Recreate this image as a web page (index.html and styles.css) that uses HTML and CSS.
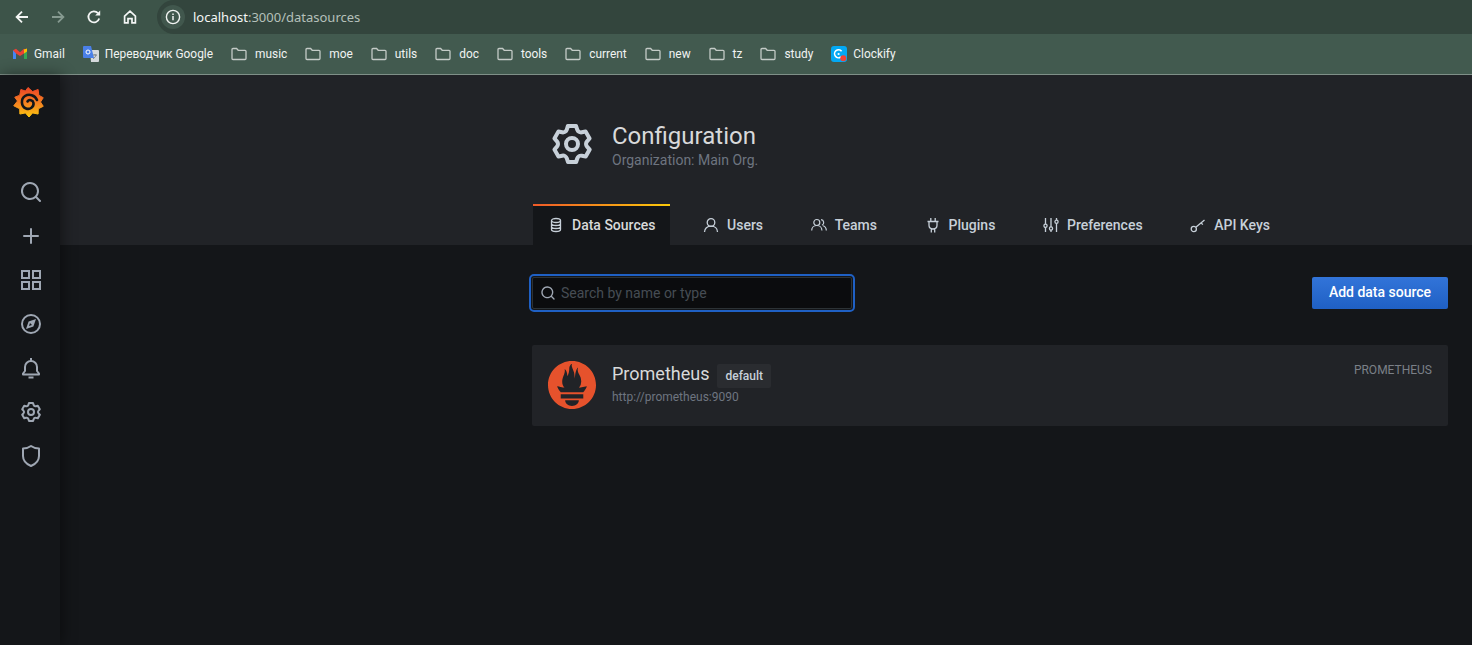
FILE: index.html
```html
<!DOCTYPE html>
<html lang="en">
<head>
    <meta charset="UTF-8">
    <meta name="viewport" content="width=device-width, initial-scale=1.0">
    <title>Configuration: Data Sources</title>
    <link rel="stylesheet" href="styles.css">
</head>
<body>
    <svg class="sprites" aria-hidden="true">
        <symbol id="folder" viewBox="0 0 16 16">
            <path d="M1 3.5a1 1 0 0 1 1-1h3.6l1.6 1.8H14a1 1 0 0 1 1 1v7.2a1 1 0 0 1-1 1H2a1 1 0 0 1-1-1z" fill="none" stroke="currentColor" stroke-width="1.3"/>
        </symbol>
        <symbol id="search" viewBox="0 0 24 24">
            <path fill="currentColor" d="M21.71,20.29,18,16.61A9,9,0,1,0,16.61,18l3.68,3.68a1,1,0,0,0,1.42,0A1,1,0,0,0,21.71,20.29ZM11,18a7,7,0,1,1,7-7A7,7,0,0,1,11,18Z"/>
        </symbol>
        <symbol id="cog" viewBox="-0.36 0 24 24">
            <path fill="currentColor" d="M19.9,12.66a1,1,0,0,1,0-1.32L21.18,9.9a1,1,0,0,0,.12-1.17l-2-3.46a1,1,0,0,0-1.07-.48l-1.88.38a1,1,0,0,1-1.15-.66l-.61-1.83A1,1,0,0,0,13.64,2h-4a1,1,0,0,0-1,.68L8.08,4.51a1,1,0,0,1-1.15.66L5,4.79A1,1,0,0,0,4,5.27L2,8.73A1,1,0,0,0,2.1,9.9l1.27,1.44a1,1,0,0,1,0,1.32L2.1,14.1A1,1,0,0,0,2,15.27l2,3.46a1,1,0,0,0,1.07.48l1.88-.38a1,1,0,0,1,1.15.66l.61,1.83a1,1,0,0,0,1,.68h4a1,1,0,0,0,.95-.68l.61-1.83a1,1,0,0,1,1.15-.66l1.88.38a1,1,0,0,0,1.07-.48l2-3.46a1,1,0,0,0-.12-1.17ZM18.41,14l.8.9-1.28,2.22-1.18-.24a3,3,0,0,0-3.45,2L12.92,20H10.36L10,18.86a3,3,0,0,0-3.45-2l-1.18.24L4.07,14.89l.8-.9a3,3,0,0,0,0-4l-.8-.9L5.35,6.89l1.18.24a3,3,0,0,0,3.45-2L10.36,4h2.56l.38,1.14a3,3,0,0,0,3.45,2l1.18-.24,1.28,2.22-.8.9A3,3,0,0,0,18.41,14ZM11.64,8a4,4,0,1,0,4,4A4,4,0,0,0,11.64,8Zm0,6a2,2,0,1,1,2-2A2,2,0,0,1,11.64,14Z"/>
        </symbol>
    </svg>

    <div class="browser">
        <div class="toolbar">
            <svg class="nav-icon" viewBox="0 0 16 16"><path d="M14 8H3M8 2.6 2.6 8 8 13.4" fill="none" stroke="currentColor" stroke-width="1.8"/></svg>
            <svg class="nav-icon disabled" viewBox="0 0 16 16"><path d="M2 8h11M8 2.6 13.4 8 8 13.4" fill="none" stroke="currentColor" stroke-width="1.8"/></svg>
            <svg class="nav-icon" viewBox="0 0 16 16"><path d="M13.2 9.5A5.5 5.5 0 1 1 12 4.2" fill="none" stroke="currentColor" stroke-width="1.8"/><path d="M14.2 1.5v5h-5z" fill="currentColor"/></svg>
            <svg class="nav-icon" viewBox="0 0 16 16"><path d="M2.6 7.2 8 2.2l5.4 5v6.6H10V9.6H6v4.2H2.6z" fill="none" stroke="currentColor" stroke-width="1.7"/></svg>
            <div class="omnibox">
                <span class="site-info">
                    <svg viewBox="0 0 16 16" width="16" height="16"><circle cx="8" cy="8" r="6.6" fill="none" stroke="currentColor" stroke-width="1.4"/><path d="M8 7v4.2M8 4.4v1.5" stroke="currentColor" stroke-width="1.5"/></svg>
                </span>
                <span class="url"><b>localhost</b>:3000/datasources</span>
            </div>
        </div>
        <div class="bookmarks">
            <a class="bookmark site">
                <svg width="16" height="16" viewBox="0 0 16 16"><path d="M1 4v9h3V6.5z" fill="#4285f4"/><path d="M12 6.5V13h3V4z" fill="#34a853"/><path d="M1 4.2 4 2.8 8 6.2 12 2.8l3 1.4-3 3.4L8 10 4 7.6z" fill="#ea4335"/><path d="M12 3.4 15 2.6V5.4l-3 2.2z" fill="#fbbc04"/></svg>
                Gmail
            </a>
            <a class="bookmark site">
                <svg width="16" height="18" viewBox="0 0 16 18"><path d="M7 5h8a1 1 0 0 1 1 1v10a1 1 0 0 1-1 1H8z" fill="#d5d9dc"/><path d="M1 1h7l3 12H1a1 1 0 0 1-1-1V2a1 1 0 0 1 1-1z" fill="#4a80e8"/><circle cx="5" cy="7" r="2" fill="none" stroke="#fff" stroke-width="1"/><path d="M10 10h4M12 9v1M13 10c-.5 2-1.600 3-3 3.600" fill="none" stroke="#7b8288" stroke-width="1"/></svg>
                Переводчик Google
            </a>
            <a class="bookmark"><svg class="folder"><use href="#folder"/></svg>music</a>
            <a class="bookmark"><svg class="folder"><use href="#folder"/></svg>moe</a>
            <a class="bookmark"><svg class="folder"><use href="#folder"/></svg>utils</a>
            <a class="bookmark"><svg class="folder"><use href="#folder"/></svg>doc</a>
            <a class="bookmark"><svg class="folder"><use href="#folder"/></svg>tools</a>
            <a class="bookmark"><svg class="folder"><use href="#folder"/></svg>current</a>
            <a class="bookmark"><svg class="folder"><use href="#folder"/></svg>new</a>
            <a class="bookmark"><svg class="folder"><use href="#folder"/></svg>tz</a>
            <a class="bookmark"><svg class="folder"><use href="#folder"/></svg>study</a>
            <a class="bookmark site">
                <svg width="16" height="16" viewBox="0 0 16 16"><rect width="16" height="16" rx="3" fill="#03a9f4"/><path d="M10.6 5.2A4 4 0 1 0 10 11" fill="none" stroke="#fff" stroke-width="1.6"/><circle cx="7.600" cy="8" r="1.100" fill="#fff"/><circle cx="12.300" cy="12.300" r="3" fill="#f44336"/></svg>
                Clockify
            </a>
        </div>
    </div>

    <div class="app">
        <aside class="sidemenu">
            <svg class="logo" viewBox="0 0 32 32" width="32" height="32">
                <defs>
                    <linearGradient id="logoFill" x1="0" y1="0" x2="0" y2="1">
                        <stop offset="0.1" stop-color="#ee4e26"/>
                        <stop offset="0.6" stop-color="#f68b1f"/>
                        <stop offset="1" stop-color="#fcc80e"/>
                    </linearGradient>
                </defs>
                <polygon fill="url(#logoFill)" stroke="url(#logoFill)" stroke-linejoin="round" points="15,1.500 19.550,5.560 25.110,3.460 25.800,9.240 30.240,11.710 27.500,16 30.240,20.290 25.300,22.760 25.110,28.040 19.550,26.940 16,31 12.450,26.940 6.890,28.040 6.700,22.760 .760,19.790 4.500,15 1.760,11.210 6.700,9.240 7.890,3.460 12.450,5.060"/>
                <path d="M24 14C22 9 16 7.500 12 10 7.500 13 8 20.500 13 22.500 17 24 21 21 20.500 17 20 14 16 13 14.500 15.500" fill="none" stroke="#141619" stroke-width="2.600" stroke-linecap="round"/>
            </svg>
            <nav class="side-icons">
                <svg><use href="#search"/></svg>
                <svg viewBox="0 0 24 24"><path fill="currentColor" d="M19,11H13V5a1,1,0,0,0-2,0v6H5a1,1,0,0,0,0,2h6v6a1,1,0,0,0,2,0V13h6a1,1,0,0,0,0-2Z"/></svg>
                <svg viewBox="0 0 24 24"><path fill="none" stroke="currentColor" stroke-width="2" d="M3 3h7v7H3zM14 3h7v7h-7zM3 14h7v7H3zM14 14h7v7h-7z"/></svg>
                <svg viewBox="0 0 24 24"><circle cx="12" cy="12" r="9" fill="none" stroke="currentColor" stroke-width="2"/><path fill="currentColor" d="M17 7l-2.600 7.400L7 17l2.600-7.400zM11 11l-1 3 3-1z" fill-rule="evenodd"/></svg>
                <svg viewBox="0 0 24 24"><path fill="none" stroke="currentColor" stroke-width="2" stroke-linejoin="round" d="M6 11a6 6 0 0 1 12 0v4l2 2.500v1H4v-1L6 15zM12 2v3M9.500 21.500h5"/></svg>
                <svg viewBox="0 0 24 24"><use href="#cog"/></svg>
                <svg viewBox="0 0 24 24"><path fill="none" stroke="currentColor" stroke-width="2" stroke-linejoin="round" d="M4 4.500C7 4.500 9.500 3.800 12 2c2.500 1.800 5 2.500 8 2.500V12c0 4.500-3.300 8-8 10-4.700-2-8-5.500-8-10z"/></svg>
            </nav>
        </aside>

        <main class="content">
            <header class="page-header">
                <div class="container">
                    <div class="page-title">
                        <svg class="title-icon"><use href="#cog"/></svg>
                        <div>
                            <h1>Configuration</h1>
                            <p>Organization: Main Org.</p>
                        </div>
                    </div>
                    <ul class="tabs">
                        <li class="tab active">
                            <svg viewBox="0 0 16 16"><g fill="none" stroke="currentColor" stroke-width="1.300"><ellipse cx="8" cy="3.500" rx="4.500" ry="2"/><path d="M3.500 3.500v9c0 1.100 2 2 4.500 2s4.500-.9 4.500-2v-9M3.500 6.500c0 1.100 2 2 4.500 2s4.500-.9 4.500-2M3.500 9.500c0 1.100 2 2 4.500 2s4.500-.9 4.500-2"/></g></svg>
                            Data Sources
                        </li>
                        <li class="tab">
                            <svg viewBox="0 0 16 16"><g fill="none" stroke="currentColor" stroke-width="1.300"><circle cx="8" cy="5.500" r="3.800"/><path d="M1.500 15c0-3.500 2.800-5.800 6.500-5.800s6.500 2.300 6.500 5.800"/></g></svg>
                            Users
                        </li>
                        <li class="tab">
                            <svg viewBox="0 0 16 16"><g fill="none" stroke="currentColor" stroke-width="1.200"><circle cx="5.800" cy="5.500" r="3"/><path d="M.7 13.500c0-3 2.200-5 5.100-5s5.100 2 5.100 5M10 2.600a3 3 0 0 1 1 5.700M12 8.700c2 .6 3.300 2.400 3.300 4.800"/></g></svg>
                            Teams
                        </li>
                        <li class="tab">
                            <svg viewBox="0 0 16 16"><g fill="none" stroke="currentColor" stroke-width="1.300"><path d="M2.500 4.500h11M4 4.500v3.800c0 2.300 1.800 3.700 4 3.700s4-1.400 4-3.700V4.500M5.800 1v3.500M10.200 1v3.500M6.300 12v3.500M9.700 12v3.500"/></g></svg>
                            Plugins
                        </li>
                        <li class="tab">
                            <svg viewBox="0 0 16 16"><g fill="none" stroke="currentColor" stroke-width="1.300"><path d="M2.500 1v6M2.500 10.500V15M8 1v9M8 13v2M13.500 1v2M13.500 6.500V15"/><circle cx="2.500" cy="8.800" r="1.600"/><circle cx="8" cy="11.500" r="1.600"/><circle cx="13.500" cy="4.800" r="1.600"/></g></svg>
                            Preferences
                        </li>
                        <li class="tab">
                            <svg viewBox="0 0 16 16"><g fill="none" stroke="currentColor" stroke-width="1.300"><circle cx="3.800" cy="12" r="2.600"/><path d="M5.800 10.200 14.500 3M11 5.800l1.800 1.800"/></g></svg>
                            API Keys
                        </li>
                    </ul>
                </div>
            </header>

            <section class="container page-body">
                <div class="action-bar">
                    <label class="search-box">
                        <svg><use href="#search"/></svg>
                        <input type="text" placeholder="Search by name or type">
                    </label>
                    <button type="button" class="btn-primary">Add data source</button>
                </div>
                <div class="ds-card">
                    <svg class="ds-logo" viewBox="0 0 24 24"><path fill="#e6522c" d="M12 0C5.373 0 0 5.372 0 12c0 6.627 5.373 12 12 12s12-5.373 12-12c0-6.628-5.373-12-12-12zm0 22.460c-1.885 0-3.414-1.260-3.414-2.814h6.828c0 1.553-1.528 2.813-3.414 2.813zm5.640-3.745H6.360v-2.046h11.280v2.046zm-.04-3.098H6.391c-.037-.043-.075-.086-.111-.130-1.155-1.401-1.427-2.133-1.690-2.879-.005-.025 1.400.287 2.395.511 0 0 .513.119 1.262.255-.720-.843-1.147-1.915-1.147-3.010 0-2.406 1.845-4.508 1.180-6.207.648.053 1.340 1.367 1.387 3.422.689-.951.977-2.690.977-3.755 0-1.103.727-2.385 1.454-2.429-.648 1.069.168 1.984.894 4.256.272.854.237 2.290.447 3.201.070-1.892.395-4.652 1.595-5.605-.529 1.200.079 2.702.494 3.424.671 1.164 1.078 2.047 1.078 3.716a4.642 4.642 0 0 1-1.110 2.996c.792-.149 1.340-.283 1.340-.283l2.573-.502s-.374 1.538-1.810 3.019z"/></svg>
                    <div class="ds-info">
                        <div class="ds-name">
                            <span>Prometheus</span>
                            <span class="badge">default</span>
                        </div>
                        <div class="ds-url">http://prometheus:9090</div>
                    </div>
                    <div class="ds-type">PROMETHEUS</div>
                </div>
            </section>
        </main>
    </div>
</body>
</html>
```

FILE: styles.css
```css
* {
    box-sizing: border-box;
}
html, body {
    height: 100%;
}
body {
    margin: 0;
    display: flex;
    flex-direction: column;
    overflow: hidden;
    background-color: #141619;
    font-family: Roboto, "Liberation Sans", sans-serif;
    font-size: 14px;
    color: #c7d0d9;
}
.sprites {
    display: none;
}

/* browser chrome */
.browser {
    flex: none;
    font-family: "Noto Sans", "Noto Sans CJK SC", sans-serif;
    color: #f1f3f2;
}
.toolbar {
    height: 34px;
    display: flex;
    align-items: center;
    padding-left: 14px;
    background-color: #3d5449;
}
.nav-icon {
    width: 16px;
    height: 16px;
    margin-right: 20px;
    color: #f4f6f5;
}
.nav-icon.disabled {
    color: #869a90;
}
.omnibox {
    flex: 1;
    height: 34px;
    margin-left: -1px;
    display: flex;
    align-items: center;
    gap: 8px;
    padding-left: 4px;
    border-radius: 17px 0 0 17px;
    background-color: #33453d;
}
.site-info {
    width: 24px;
    height: 24px;
    display: flex;
    align-items: center;
    justify-content: center;
    border-radius: 50%;
    background-color: #41574d;
}
.url {
    font-size: 13px;
    color: #b5c0ba;
}
.url b {
    font-weight: 400;
    color: #f4f6f5;
}
.bookmarks {
    height: 41px;
    display: flex;
    align-items: center;
    gap: 18px;
    padding-left: 12px;
    background-color: #425a4f;
    border-bottom: 1px solid #7f9088;
    font-family: Roboto, "Noto Sans", sans-serif;
    font-size: 11.9px;
}
.bookmark {
    display: flex;
    align-items: center;
    gap: 8px;
}
.bookmark.site {
    gap: 6px;
}
.folder {
    width: 16px;
    height: 16px;
    color: #c4cbc7;
}

/* grafana */
.app {
    flex: 1;
    display: flex;
    min-height: 0;
}
.sidemenu {
    flex: none;
    width: 60px;
    position: relative;
    z-index: 1;
    background-color: #141619;
    box-shadow: 2px 0 14px rgba(0, 0, 0, 0.45);
}
.logo {
    display: block;
    margin: 11px 0 0 13px;
}
.side-icons {
    display: flex;
    flex-direction: column;
    align-items: center;
    gap: 20px;
    margin-top: 62px;
    padding-left: 2px;
    color: #9fa7b3;
}
.side-icons svg {
    width: 24px;
    height: 24px;
}
.content {
    flex: 1;
    min-width: 0;
}
.container {
    margin-left: 472px;
    margin-right: 24px;
}
.page-header {
    height: 170px;
    background-color: #212327;
}
.page-header .container {
    height: 100%;
    display: flex;
    flex-direction: column;
    justify-content: space-between;
}
.page-title {
    display: flex;
    align-items: center;
    gap: 16px;
    padding: 45px 0 0 16px;
}
.title-icon {
    width: 48px;
    height: 48px;
    flex: none;
    color: #c7d0d9;
}
h1 {
    margin: 2px 0 0;
    font-size: 24px;
    font-weight: 400;
    line-height: 28px;
    color: #d8d9da;
}
.page-title p {
    margin: 2px 0 0;
    font-size: 14px;
    line-height: 16px;
    color: #6e7580;
}
.tabs {
    display: flex;
    gap: 17.6px;
    margin: 0;
    padding: 0 0 0 1px;
    list-style: none;
}
.tab {
    height: 41px;
    display: flex;
    align-items: center;
    gap: 8px;
    padding: 0 15px;
    font-weight: 500;
    color: #c7d0d9;
}
.tab svg {
    width: 16px;
    height: 16px;
    color: #c7d0d9;
}
.tab.active {
    background: linear-gradient(90deg, #f05a28, #fbca0a) top / 100% 2px no-repeat #141619;
    color: #d8d9da;
}
.action-bar {
    display: flex;
    justify-content: space-between;
    align-items: center;
    margin-top: 32px;
}
.search-box {
    width: 320px;
    height: 32px;
    display: flex;
    align-items: center;
    gap: 5px;
    padding: 0 7px;
    background-color: #0b0c0e;
    border: 1px solid #2c3235;
    border-radius: 2px;
    outline: 2px solid #1f60c4;
    outline-offset: 1px;
    color: #9fa7b3;
}
.search-box svg {
    width: 16px;
    height: 16px;
    flex: none;
}
.search-box input {
    flex: 1;
    min-width: 0;
    border: none;
    outline: none;
    padding: 0;
    background: transparent;
    font: inherit;
    color: #c7d0d9;
}
.search-box input::placeholder {
    color: #464c54;
}
.btn-primary {
    width: 136px;
    height: 32px;
    padding: 0 0 2px;
    border: none;
    border-radius: 2px;
    background: linear-gradient(180deg, #3274d9, #1f60c4);
    font: inherit;
    font-weight: 500;
    color: #fff;
    cursor: pointer;
}
.ds-card {
    height: 81px;
    display: flex;
    gap: 16px;
    margin-top: 36px;
    padding: 16px;
    background-color: #212327;
    border-radius: 2px;
}
.ds-logo {
    width: 48px;
    height: 48px;
    flex: none;
}
.ds-info {
    flex: 1;
}
.ds-name {
    display: flex;
    align-items: flex-start;
    gap: 8px;
    margin-top: 1px;
    font-size: 18px;
    font-weight: 400;
    line-height: 24px;
    color: #d8d9da;
}
.badge {
    height: 24px;
    margin-top: 2px;
    padding: 0 8px;
    border-radius: 2px;
    background-color: #2a2c30;
    font-size: 12px;
    font-weight: 500;
    line-height: 24px;
    color: #c7d0d9;
}
.ds-url {
    margin-top: 1px;
    font-size: 12px;
    line-height: 16px;
    color: #6e7580;
}
.ds-type {
    margin-top: 1px;
    font-size: 12px;
    line-height: 16px;
    color: #7b8087;
}
```
